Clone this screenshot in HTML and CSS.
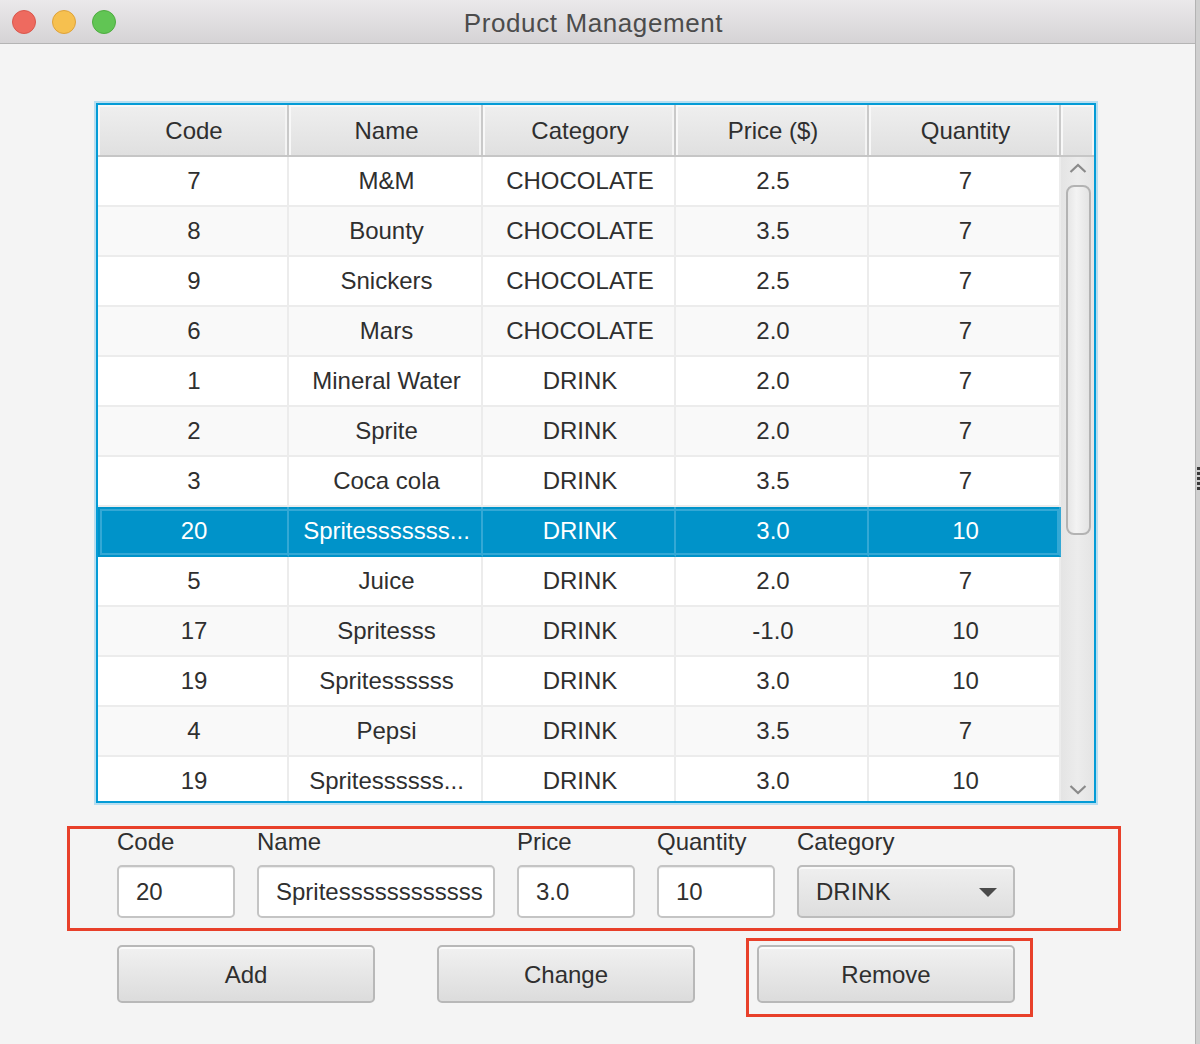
FILE: index.html
```html
<!DOCTYPE html>
<html>
<head>
<meta charset="utf-8">
<link rel="stylesheet" href="styles.css">
</head>
<body>
<div class="screen">
  <div class="window">
    <div class="titlebar">
      <div class="lights">
        <span class="light red"></span>
        <span class="light yellow"></span>
        <span class="light green"></span>
      </div>
      <div class="title">Product Management</div>
    </div>
    <div class="content">
      <div class="table">
        <div class="thead">
          <div class="th">Code</div>
          <div class="th">Name</div>
          <div class="th">Category</div>
          <div class="th">Price ($)</div>
          <div class="th">Quantity</div>
          <div class="th corner"></div>
        </div>
        <div class="tbody-wrap">
          <div class="tbody">
            <div class="tr"><div class="td">7</div><div class="td">M&amp;M</div><div class="td">CHOCOLATE</div><div class="td">2.5</div><div class="td">7</div></div>
            <div class="tr odd"><div class="td">8</div><div class="td">Bounty</div><div class="td">CHOCOLATE</div><div class="td">3.5</div><div class="td">7</div></div>
            <div class="tr"><div class="td">9</div><div class="td">Snickers</div><div class="td">CHOCOLATE</div><div class="td">2.5</div><div class="td">7</div></div>
            <div class="tr odd"><div class="td">6</div><div class="td">Mars</div><div class="td">CHOCOLATE</div><div class="td">2.0</div><div class="td">7</div></div>
            <div class="tr"><div class="td">1</div><div class="td">Mineral Water</div><div class="td">DRINK</div><div class="td">2.0</div><div class="td">7</div></div>
            <div class="tr odd"><div class="td">2</div><div class="td">Sprite</div><div class="td">DRINK</div><div class="td">2.0</div><div class="td">7</div></div>
            <div class="tr"><div class="td">3</div><div class="td">Coca cola</div><div class="td">DRINK</div><div class="td">3.5</div><div class="td">7</div></div>
            <div class="tr selected"><div class="td">20</div><div class="td">Spritesssssss...</div><div class="td">DRINK</div><div class="td">3.0</div><div class="td">10</div></div>
            <div class="tr"><div class="td">5</div><div class="td">Juice</div><div class="td">DRINK</div><div class="td">2.0</div><div class="td">7</div></div>
            <div class="tr odd"><div class="td">17</div><div class="td">Spritesss</div><div class="td">DRINK</div><div class="td">-1.0</div><div class="td">10</div></div>
            <div class="tr"><div class="td">19</div><div class="td">Spritessssss</div><div class="td">DRINK</div><div class="td">3.0</div><div class="td">10</div></div>
            <div class="tr odd"><div class="td">4</div><div class="td">Pepsi</div><div class="td">DRINK</div><div class="td">3.5</div><div class="td">7</div></div>
            <div class="tr"><div class="td">19</div><div class="td">Spritessssss...</div><div class="td">DRINK</div><div class="td">3.0</div><div class="td">10</div></div>
          </div>
          <div class="vscroll">
            <svg class="arrow" width="18" height="10" viewBox="0 0 18 10"><path d="M1.5 9 L9 2 L16.5 9" fill="none" stroke="#8a8a8a" stroke-width="2.2"/></svg>
            <div class="track"><div class="thumb"></div></div>
            <svg class="arrow" width="18" height="10" viewBox="0 0 18 10"><path d="M1.5 1 L9 8 L16.5 1" fill="none" stroke="#8a8a8a" stroke-width="2.2"/></svg>
          </div>
        </div>
      </div>

      <div class="form">
        <div class="field w118">
          <div class="label">Code</div>
          <div class="input">20</div>
        </div>
        <div class="field w238">
          <div class="label">Name</div>
          <div class="input clip"><span class="clipped">Spritessssssssssssss</span></div>
        </div>
        <div class="field w118">
          <div class="label">Price</div>
          <div class="input">3.0</div>
        </div>
        <div class="field w118">
          <div class="label">Quantity</div>
          <div class="input">10</div>
        </div>
        <div class="field w218">
          <div class="label">Category</div>
          <div class="combo"><span>DRINK</span><svg width="18" height="10" viewBox="0 0 18 10"><path d="M0 0 L18 0 L9 9 Z" fill="#4a4a4a"/></svg></div>
        </div>
        <div class="annot form-annot"></div>
      </div>

      <div class="buttons">
        <div class="btn">Add</div>
        <div class="btn">Change</div>
        <div class="btn-wrap">
          <div class="btn">Remove</div>
          <div class="annot remove-annot"></div>
        </div>
      </div>
    </div>
  </div>
  <div class="edge"><div class="grip"></div></div>
</div>
</body>
</html>
```

FILE: styles.css
```css
* { box-sizing: border-box; }
html, body { margin: 0; padding: 0; }
body {
  width: 1200px;
  height: 1044px;
  overflow: hidden;
  font-family: "Liberation Sans", Arial, sans-serif;
  color: #2f2f2f;
  background: #f4f4f4;
}
.screen { display: flex; width: 1200px; height: 1044px; }
.window {
  width: 1196px;
  height: 1044px;
  background: #f4f4f4;
  display: flex;
  flex-direction: column;
  border-right: 1px solid #b3b3b3;
}
.edge {
  width: 4px;
  height: 1044px;
  background: #cfcfcf;
  position: relative;
}
.grip {
  position: absolute;
  left: 1px;
  top: 467px;
  width: 3px;
  height: 24px;
  background: repeating-linear-gradient(#3a3a3a 0 3px, transparent 3px 5px);
}
.titlebar {
  height: 44px;
  flex: none;
  background: linear-gradient(#ebe9eb, #d5d3d5);
  border-bottom: 1px solid #b4b4b4;
  display: flex;
  align-items: center;
  position: relative;
}
.lights { display: flex; gap: 16px; padding-left: 12px; }
.light {
  width: 24px; height: 24px; border-radius: 50%;
  display: block;
}
.red { background: #ee6a5f; border: 1px solid #d9574c; }
.yellow { background: #f6c04f; border: 1px solid #dea23a; }
.green { background: #61c554; border: 1px solid #4eac40; }
.title {
  position: absolute;
  left: 0; right: 8px;
  top: 8px;
  text-align: center;
  font-size: 26px;
  letter-spacing: 0.6px;
  color: #4c4c4c;
}
.content {
  flex: 1;
  padding: 59px 0 0 96px;
  position: relative;
}
.table {
  width: 1000px;
  height: 700px;
  border: 2px solid #039bd6;
  box-shadow: 0 0 0 2px #b7def0;
  background: #fff;
  display: flex;
  flex-direction: column;
}
.thead {
  display: grid;
  grid-template-columns: 191px 194px 193px 193px 192px 33px;
  height: 52px;
  flex: none;
  border-bottom: 2px solid #c6c6c6;
}
.th {
  background: linear-gradient(#efefef, #e0e0e0);
  border-right: 2px solid #c9c9c9;
  box-shadow: inset 2px 2px 0 #f8f8f8, inset -2px 0 0 #f4f4f4;
  display: flex;
  align-items: center;
  justify-content: center;
  font-size: 24px;
  color: #2f2f2f;
  padding-top: 2px;
  padding-left: 3px;
}
.th.corner { border-right: none; }
.tbody-wrap {
  flex: 1;
  display: flex;
  overflow: hidden;
}
.tbody { width: 963px; overflow: hidden; }
.tr {
  display: grid;
  grid-template-columns: 191px 194px 193px 193px 192px;
  height: 50px;
  background: #ffffff;
}
.tr.odd { background: #f9f9f9; }
.td {
  display: flex;
  align-items: center;
  justify-content: center;
  font-size: 24px;
  border-right: 2px solid #ececec;
  border-bottom: 2px solid #ececec;
  padding-left: 3px;
  white-space: nowrap;
}
.tr.selected {
  background: #0093c9;
  color: #ffffff;
  box-shadow: inset 0 0 0 2px #0093c9, inset 0 0 0 4px #34a8d5;
}
.tr.selected .td { border-right-color: #34a8d5; border-bottom-color: #0093c9; }
.vscroll {
  width: 33px;
  background: linear-gradient(90deg, #e4e4e4, #ececec 50%, #e4e4e4);
  display: flex;
  flex-direction: column;
  align-items: center;
  padding: 6px 0 6px;
}
.arrow { flex: none; display: block; }
.track { flex: 1; width: 100%; padding: 12px 3px 0 5px; }
.thumb {
  width: 25px;
  height: 350px;
  border: 2px solid #b3b3b3;
  border-radius: 8px;
  background: linear-gradient(90deg, #e6e6e6, #f3f3f3 40%, #e4e4e4);
}
.form {
  position: relative;
  display: flex;
  gap: 22px;
  margin-top: 27px;
  padding-left: 21px;
  height: 88px;
}
.field { display: flex; flex-direction: column; }
.w118 { width: 118px; }
.w238 { width: 238px; }
.w218 { width: 218px; }
.label {
  font-size: 24px;
  color: #2f2f2f;
  height: 35px;
  line-height: 24px;
}
.input {
  height: 53px;
  background: #fff;
  border: 2px solid #c4c4c4;
  border-radius: 5px;
  font-size: 24px;
  display: flex;
  align-items: center;
  padding-left: 17px;
  box-shadow: inset 0 2px 1px -1px #e9e9e9;
  white-space: nowrap;
  overflow: hidden;
}
.input.clip { padding-left: 0; padding-right: 0; }
.clipped {
  display: block;
  margin-left: 17px;
  width: 207px;
  overflow: hidden;
  white-space: nowrap;
}
.combo {
  height: 53px;
  border: 2px solid #bcbcbc;
  border-radius: 5px;
  background: linear-gradient(#efefef, #dedede);
  display: flex;
  align-items: center;
  justify-content: space-between;
  padding: 0 16px 0 17px;
  font-size: 24px;
  box-shadow: inset 0 2px 0 #f9f9f9;
}
.combo svg { margin-top: 2px; }
.buttons {
  display: flex;
  gap: 62px;
  margin-top: 27px;
  padding-left: 21px;
}
.btn {
  width: 258px;
  height: 58px;
  border: 2px solid #b8b8b8;
  border-radius: 5px;
  background: linear-gradient(#f1f1f1, #dcdcdc);
  box-shadow: inset 0 2px 0 #fbfbfb;
  display: flex;
  align-items: center;
  justify-content: center;
  font-size: 24px;
  color: #2f2f2f;
  padding-top: 2px;
}
.btn-wrap { position: relative; }
.annot {
  position: absolute;
  border: 3px solid #e8402a;
  pointer-events: none;
}
.form-annot { left: -29px; top: -4px; width: 1054px; height: 105px; }
.remove-annot { left: -11px; top: -7px; width: 287px; height: 79px; }
```
